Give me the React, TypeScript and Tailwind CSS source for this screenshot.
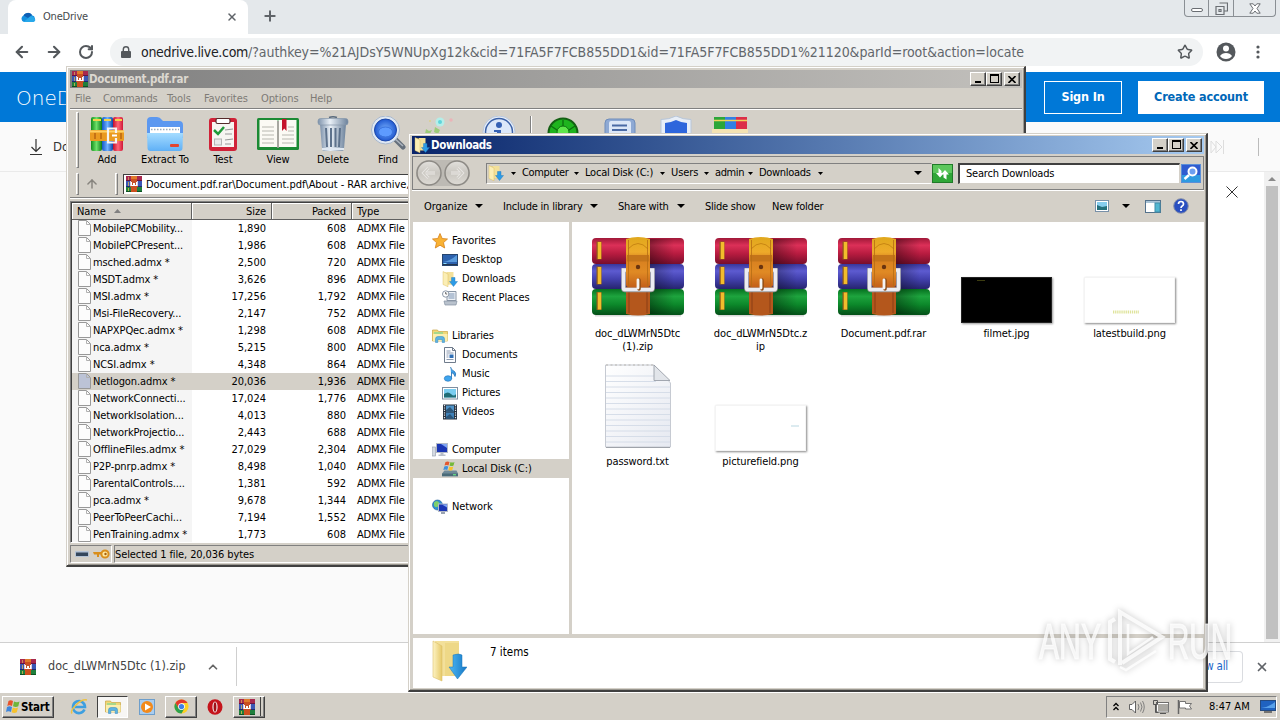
import React from "react";
import { ArrowLeft, ArrowRight, RotateCw, X, Plus, Star, ArrowUp, ChevronUp } from "lucide-react";

type IconProps = { className?: string };

/* ---------- shared icons ---------- */

function RarSmall({ className = "h-4 w-4" }: IconProps) {
  return (
    <svg viewBox="0 0 16 16" className={className} shapeRendering="crispEdges">
      <rect x="0" y="0" width="16" height="5" fill="#a8284e" />
      <rect x="0" y="4" width="16" height="1" fill="#6b1440" />
      <rect x="0" y="5" width="16" height="6" fill="#3a56b4" />
      <rect x="0" y="10" width="16" height="1" fill="#1c2a70" />
      <rect x="0" y="11" width="16" height="5" fill="#1f7f3c" />
      <rect x="0" y="15" width="16" height="1" fill="#0d5222" />
      <rect x="2" y="1" width="1" height="3" fill="#c98a5a" />
      <rect x="2" y="6" width="1" height="4" fill="#b9a468" />
      <rect x="2" y="12" width="1" height="3" fill="#b5b04a" />
      <rect x="5" y="0" width="6" height="16" fill="#cc4f1e" />
      <rect x="5" y="0" width="6" height="3" fill="#e07a2b" />
      <rect x="4" y="5" width="8" height="6" fill="#c4512a" />
      <path d="M5 6h1v3h1V7h2v2h1V6h1v4H5z" fill="#fff" />
      <path d="M4 5h1v5H4zM11 5h1v5h-1z" fill="#d8cde0" />
    </svg>
  );
}

function DownFolder({ className = "h-4 w-4" }: IconProps) {
  return (
    <svg viewBox="0 0 16 16" className={className}>
      <path d="M2 1.500h9v12H2z" fill="#ecd27a" />
      <path d="M5 1h6.500v12H5z" fill="#f3e09a" />
      <path d="M1 .5l5 2.500v12.800L1 13.500z" fill="#fbeeb5" stroke="#d9b650" strokeWidth=".4" />
      <path d="M9.500 6.500h3.500v4h2.500L11.500 15.500 7.500 10.500h2z" fill="#2d9be6" stroke="#1a74b8" strokeWidth=".4" />
    </svg>
  );
}

function ExplorerFolder({ className = "h-4 w-4" }: IconProps) {
  return (
    <svg viewBox="0 0 16 16" className={className}>
      <path d="M.5 2h5l1 1.500h9V13H.5z" fill="#f0d777" stroke="#c9a542" strokeWidth=".7" />
      <path d="M2 4h9v4H2z" fill="#a8d88a" />
      <path d="M1 6h14.500v7H1z" fill="#fbeeae" />
      <path d="M3.500 14.500V11q0-2.500 2.500-2.500h4q2.500 0 2.500 2.500v3.500h-2.300V11.500H5.800v3z" fill="#5cb3e4" stroke="#2f86bd" strokeWidth=".5" />
    </svg>
  );
}

/* ---------- WinRAR toolbar icons ---------- */

function AddIcon() {
  return (
    <svg viewBox="0 0 34 36" className="h-9 w-[34px]">
      <defs>
        <linearGradient id="ag"><stop offset="0" stopColor="#128f1c" /><stop offset=".5" stopColor="#6ee06a" /><stop offset="1" stopColor="#0c7d18" /></linearGradient>
        <linearGradient id="ab"><stop offset="0" stopColor="#1458c8" /><stop offset=".5" stopColor="#6fb2ff" /><stop offset="1" stopColor="#0f47a8" /></linearGradient>
        <linearGradient id="ar"><stop offset="0" stopColor="#c4102c" /><stop offset=".5" stopColor="#ff6678" /><stop offset="1" stopColor="#d01838" /></linearGradient>
      </defs>
      <rect x="1" y="1" width="11" height="34" rx="2" fill="url(#ag)" />
      <rect x="12" y="1" width="11" height="34" rx="2" fill="url(#ab)" />
      <rect x="23" y="1" width="10" height="34" rx="2" fill="url(#ar)" />
      <path d="M3 4h8M14 4h7M25 4h7" stroke="#f6d24a" strokeWidth="2" />
      <rect x="0" y="14" width="34" height="11" rx="1.500" fill="#ea9a20" />
      <path d="M0 15.500h34" stroke="#ffd063" strokeWidth="2" />
      <path d="M5 17v6M11 17v6M31 17v6" stroke="#b96612" strokeWidth="1.500" />
      <path d="M26 17v-4.500h-8v14h8V22" fill="none" stroke="#f4f4f4" strokeWidth="2.200" />
      <path d="M22 19.500h5" stroke="#fff" strokeWidth="2" />
    </svg>
  );
}

function ExtractIcon() {
  return (
    <svg viewBox="0 0 36 36" className="h-9 w-9">
      <defs><linearGradient id="ex" x2="0" y2="1"><stop offset="0" stopColor="#a5dcff" /><stop offset="1" stopColor="#5fb0f6" /></linearGradient></defs>
      <path d="M0 5q0-4 4-4h6q3 0 5 3l1 1h16q4 0 4 4v13H0z" fill="#5c98f0" />
      <path d="M3 11h30v10H3z" fill="#fff" />
      <path d="M4 13.500h28" stroke="#9ab" strokeWidth="1.500" strokeDasharray="1.500 1.500" />
      <path d="M0 17h36l-.5 15q0 3-3 3h-29q-3 0-3-3z" fill="url(#ex)" />
      <rect x="23" y="28" width="9" height="3" rx="1" fill="#e2452f" />
    </svg>
  );
}

function TestIcon() {
  return (
    <svg viewBox="0 0 30 36" className="h-9 w-[30px]">
      <rect x="1" y="2" width="28" height="33" rx="3" fill="#d02238" />
      <path d="M4 6h22v25H4z" fill="#f7f5f2" />
      <rect x="8" y="2.500" width="14" height="5" rx="1.500" fill="#fff" stroke="#552a2a" strokeWidth="1.200" />
      <path d="M6 14l4 4 6-7" fill="none" stroke="#219a3a" strokeWidth="2.500" />
      <path d="M17 14l8-1M17 18h7M17 24l8-1M17 28h6" stroke="#999" strokeWidth="1.200" />
      <rect x="6.500" y="23" width="7" height="6" fill="#e9e9e9" stroke="#b5b5b5" />
    </svg>
  );
}

function ViewIcon() {
  return (
    <svg viewBox="0 0 42 36" className="h-9 w-[42px]">
      <rect x="0" y="2" width="42" height="32" rx="1.500" fill="#1b8a34" />
      <path d="M2.500 4h17q1.500 0 1.500 1 0-1 1.500-1h17v27H22l-1 1-1-1H2.500z" fill="#fbfaf4" />
      <path d="M21 5v27" stroke="#8b8b85" strokeWidth="1.500" />
      <path d="M5 11h12M5 15h12M5 19h12M5 23h12M5 27h12M25 19h12M25 23h12M25 27h12M31 15h6M31 11h6" stroke="#b8b8b0" strokeWidth="1" />
      <path d="M25 3h4.500v12l-2.200-2.500L25 15z" fill="#c5142c" />
    </svg>
  );
}

function DeleteIcon() {
  return (
    <svg viewBox="0 0 32 36" className="h-9 w-8">
      <defs><linearGradient id="tr"><stop offset="0" stopColor="#7d92ab" /><stop offset=".4" stopColor="#e9f0f7" /><stop offset="1" stopColor="#6c829c" /></linearGradient></defs>
      <path d="M12 1.500q4-1.500 8 0" fill="none" stroke="#5a6b7e" strokeWidth="1.500" />
      <path d="M3 8h26l-2 25q0 2-3 2H8q-3 0-3-2z" fill="url(#tr)" />
      <rect x="1" y="2.500" width="30" height="6.500" rx="2.500" fill="url(#tr)" stroke="#8496aa" strokeWidth=".7" />
      <path d="M9 12l1 19M14 12v19M18.500 12v19M23 12l-1 19" stroke="#5d728c" strokeWidth="2" />
      <path d="M5 33h22" stroke="#dfe8f2" strokeWidth="2" />
    </svg>
  );
}

function FindIcon() {
  return (
    <svg viewBox="0 0 36 36" className="h-9 w-9">
      <defs><radialGradient id="fd"><stop offset="0" stopColor="#7db4ff" /><stop offset="1" stopColor="#1f58d0" /></radialGradient></defs>
      <path d="M24 22l9 9" stroke="#66707c" strokeWidth="5" strokeLinecap="round" />
      <path d="M24 22l9 8" stroke="#aeb6c0" strokeWidth="1.500" />
      <circle cx="15.500" cy="14" r="14" fill="#dfe8f4" stroke="#a9b8cc" />
      <circle cx="15.500" cy="14" r="11" fill="url(#fd)" stroke="#1c47a8" />
      <ellipse cx="15.500" cy="16" rx="7" ry="5" fill="#5d9bff" stroke="#3872dd" />
    </svg>
  );
}

function WizardIcon() {
  return (
    <svg viewBox="0 0 30 36" className="h-9 w-[30px]">
      <path d="M1 13l3 2 3-1-2 4H0zM10 11l5 3-2 4-4-2z" fill="#9ccb78" />
      <circle cx="15" cy="6" r="4.500" fill="#b4eee9" /><circle cx="15" cy="6" r="2" fill="#5fd4da" />
      <circle cx="26" cy="4" r="1.800" fill="#eab4b8" /><circle cx="5" cy="5" r="1" fill="#dcd18c" />
    </svg>
  );
}

function InfoIcon() {
  return (
    <svg viewBox="0 0 34 36" className="h-9 w-[34px]">
      <circle cx="17" cy="16" r="16" fill="#e9f0fa" stroke="#b6c6dd" />
      <circle cx="17" cy="16" r="13.500" fill="#dce8f9" stroke="#3c62a8" strokeWidth="1.500" />
      <circle cx="17" cy="9" r="3" fill="#3561b4" /><path d="M12 14h7v10h-4v-8h-3z" fill="#3561b4" />
    </svg>
  );
}

function VirusIcon() {
  return (
    <svg viewBox="0 0 34 36" className="h-9 w-[34px]">
      <circle cx="17" cy="17" r="14.500" fill="#1eb41e" stroke="#146014" strokeWidth="2" />
      <path d="M17 4v28M5 10l24 16M29 10L5 26" stroke="#0c6e0f" strokeWidth="1.300" />
      <circle cx="17" cy="16" r="6" fill="#5ee64a" stroke="#0d7210" />
    </svg>
  );
}

function CommentIcon() {
  return (
    <svg viewBox="0 0 32 36" className="h-9 w-8">
      <rect x="1" y="3" width="30" height="24" rx="4" fill="#8ea9d4" stroke="#6f8dbb" />
      <rect x="5" y="5" width="22" height="20" rx="2" fill="#dce7f7" />
      <path d="M8 9.500h15M8 14h15" stroke="#4a6aa4" strokeWidth="2" />
    </svg>
  );
}

function ProtectIcon() {
  return (
    <svg viewBox="0 0 32 36" className="h-9 w-8">
      <path d="M16 0q7 3.500 15 3.500V18q0 11-15 17Q1 29 1 18V3.500Q9 3.500 16 0z" fill="#e7eef8" stroke="#b7c6da" />
      <path d="M16 4q6 3 11 3V18q0 8-11 13Q5 26 5 18V7Q10 7 16 4z" fill="#2e66dc" />
    </svg>
  );
}

function SfxIcon() {
  return (
    <svg viewBox="0 0 36 36" className="h-9 w-9">
      <path d="M2 1h11v12H2z" fill="#2ba63a" /><path d="M13 1h11v12H13z" fill="#3180e6" /><path d="M24 1h11v12H24z" fill="#dc2e4a" />
      <path d="M2 4.500h33" stroke="#f1d35a" strokeWidth="1.500" />
      <path d="M0 13h36v18H0z" fill="#f3e2b2" />
    </svg>
  );
}

/* ---------- explorer side icons ---------- */

const side: Record<string, React.ReactNode> = {
  Favorites: <path d="M8 .5l2.200 5 5.300.5-4 3.600 1.200 5.400L8 12.200 3.300 15l1.200-5.400L.5 6l5.300-.5z" fill="#f9b233" stroke="#d5801a" strokeWidth=".8" />,
  Desktop: (
    <>
      <rect x=".5" y="2.500" width="15" height="11" fill="#2d62ae" stroke="#26456e" />
      <path d="M1 10Q8 9 15 3v7z" fill="#5a9bdc" /><path d="M1 12.500h14" stroke="#24364e" /><path d="M1.500 11.500h3" stroke="#8ee0ff" />
    </>
  ),
  "Recent Places": (
    <>
      <path d="M5 1.500h9v9H5z" fill="#eef2f7" stroke="#8b97a6" /><path d="M6.500 4h6M6.500 6h6M6.500 8h6" stroke="#7a93b3" />
      <path d="M2 11h13l-1 4H3z" fill="#b9c2cd" stroke="#8490a0" strokeWidth=".7" />
      <circle cx="3.700" cy="4" r="3.200" fill="#fff" stroke="#8b97a6" /><path d="M3.700 2v2h1.500" fill="none" stroke="#444" strokeWidth=".8" />
    </>
  ),
  Documents: (
    <>
      <path d="M2.500.5h8l3 3v12h-11z" fill="#fcfdff" stroke="#6f7b8b" /><path d="M10.500.5v3h3" fill="none" stroke="#6f7b8b" />
      <path d="M4.500 4h4M4.500 6h7M4.500 12.500h7M4.500 8h2M4.500 10h2" stroke="#8d9bb0" /><rect x="7.500" y="7.500" width="4" height="3.500" fill="#2f6fb5" />
    </>
  ),
  Music: (
    <>
      <path d="M8.500 1q.5 3 4 4.500 2 2 .5 5-.3-3-3.500-4v6.500" fill="#3f9ee6" stroke="#1d6db4" strokeWidth=".8" />
      <ellipse cx="6" cy="12.500" rx="3.700" ry="2.800" fill="#3fa5ee" stroke="#1d6db4" strokeWidth=".6" />
    </>
  ),
  Pictures: (
    <>
      <rect x=".5" y="2.500" width="15" height="11.500" fill="#fff" stroke="#7f8fa0" /><rect x="2" y="4" width="12" height="8.500" fill="#79cdf0" />
      <path d="M2 9q4-3 7 0t5 0v3.500H2z" fill="#1f6d76" />
    </>
  ),
  Videos: (
    <>
      <rect x="1" y=".5" width="14" height="15" fill="#26303c" /><path d="M2.500 1v14M13.500 1v14" stroke="#dfe6ee" strokeWidth="1.200" strokeDasharray="1.200 1.200" />
      <rect x="4" y="1.500" width="8" height="6" fill="#4f93c8" /><rect x="4" y="8.500" width="8" height="6" fill="#3f81b8" />
      <path d="M4 6l4-3 4 4.500H4zM4 13l4-3 4 4.500H4z" fill="#2b5578" />
    </>
  ),
  Computer: (
    <>
      <rect x="0" y="5" width="3.500" height="9" fill="#d5dae2" stroke="#8e97a5" strokeWidth=".6" />
      <rect x="4.500" y="1.500" width="11" height="9" fill="#1b36b4" stroke="#b4bac6" /><path d="M9 2h6v4z" fill="#7fa4f4" />
      <path d="M8.500 11h3v1.500h2V14h-7v-1.500h2z" fill="#b8bec9" />
    </>
  ),
  "Local Disk (C:)": (
    <>
      <path d="M2.500 9.500h12l1.500 3v3H0v-3z" fill="#6f8a98" /><path d="M0 12.500h16V15H0z" fill="#4a6b78" /><path d="M11 13.800h3" stroke="#6fff8a" />
      <path d="M3.500 1q2-1 4 0L6.500 4.500q-2-1-4 0z" fill="#e4572e" /><path d="M8.500 1q2 1 4 0L11.500 4.500q-2 1-4 0z" fill="#75b83a" />
      <path d="M2.300 5.500q2-1 4 0l-1 3.500q-2-1-4 0z" fill="#3f8fdc" /><path d="M7.300 5.500q2 1 4 0l-1 3.500q-2 1-4 0z" fill="#f6c22e" />
    </>
  ),
  Network: (
    <>
      <circle cx="5.500" cy="6" r="5" fill="#2f8fd4" stroke="#1c5c94" strokeWidth=".6" /><path d="M2 3.500q3-3 5 0t-1 4q-3 2-4-1z" fill="#7ed06b" />
      <rect x="6.500" y="5" width="9" height="7.500" fill="#1b36b4" stroke="#b4bac6" /><path d="M10 5.500h5v3z" fill="#7fa4f4" /><path d="M9 13h4v2H9z" fill="#9aa3b2" />
    </>
  ),
};

function SideIcon({ name }: { name: string }) {
  if (name === "Downloads") return <DownFolder />;
  if (name === "Libraries") return <ExplorerFolder />;
  return <svg viewBox="0 0 16 16" className="h-4 w-4">{side[name]}</svg>;
}

/* ---------- file thumbnails ---------- */

function RarBig() {
  return (
    <svg viewBox="0 0 92 80" className="h-20 w-[92px]">
      <defs>
        <linearGradient id="br" x2="0" y2="1"><stop offset="0" stopColor="#a01838" /><stop offset=".28" stopColor="#dc3058" /><stop offset=".6" stopColor="#b81c40" /><stop offset="1" stopColor="#780e2c" /></linearGradient>
        <linearGradient id="bb" x2="0" y2="1"><stop offset="0" stopColor="#38369c" /><stop offset=".28" stopColor="#5d5bd0" /><stop offset=".6" stopColor="#4341ae" /><stop offset="1" stopColor="#26246e" /></linearGradient>
        <linearGradient id="bg" x2="0" y2="1"><stop offset="0" stopColor="#06701f" /><stop offset=".28" stopColor="#1ea43e" /><stop offset=".6" stopColor="#0c882a" /><stop offset="1" stopColor="#045018" /></linearGradient>
        <linearGradient id="bt" x2="0" y2="1"><stop offset="0" stopColor="#e0a81c" /><stop offset=".3" stopColor="#eeaa2a" /><stop offset=".45" stopColor="#d8801f" /><stop offset=".7" stopColor="#e08a24" /><stop offset="1" stopColor="#c4601a" /></linearGradient>
        <linearGradient id="bs"><stop offset="0" stopColor="#000" stopOpacity=".35" /><stop offset=".35" stopColor="#000" stopOpacity=".22" /><stop offset="1" stopColor="#000" stopOpacity="0" /></linearGradient>
      </defs>
      <path d="M3 78.500h86" stroke="#000" strokeOpacity=".15" strokeWidth="2" />
      <rect x="0" y="1" width="92" height="26" rx="4" fill="url(#br)" />
      <rect x="0" y="27" width="92" height="25" rx="4" fill="url(#bb)" />
      <rect x="0" y="52" width="92" height="26" rx="4" fill="url(#bg)" />
      <rect x="58" y="2" width="24" height="75" fill="url(#bs)" />
      <path d="M7 4.500v18M7 29.500v18M7 55v18" stroke="#8e5a18" strokeWidth="5" />
      <path d="M7.500 5v17M7.500 30v17M7.500 55.500v17" stroke="#f2bc2c" strokeWidth="3.500" />
      <path d="M34 50h24v27q-12 3-24 0z" fill="#b4571c" />
      <path d="M37 52v24M55 52v24" stroke="#8a3f14" />
      <path d="M34 33.500h-2.500v18q0 1.500 1.500 1.500h26q1.500 0 1.500-1.500v-18H58" fill="none" stroke="#9a9a9a" strokeWidth="4.500" />
      <path d="M34 33h-2.500v18q0 1.500 1.500 1.500h26q1.500 0 1.500-1.500V33H58" fill="none" stroke="#ececf2" strokeWidth="3.500" />
      <path d="M34 2q12-4 24 0v46q0 2-2 2H36q-2 0-2-2z" fill="url(#bt)" />
      <path d="M35 18h22v6.500H35z" fill="#c4741a" /><path d="M36 12q10-11 20 0" fill="none" stroke="#c88613" />
      <path d="M36.500 3v47M55.500 3v47" stroke="#b56c14" strokeWidth=".8" />
      <circle cx="46" cy="30" r="2.200" fill="#6a3410" />
      <path d="M47 43v9" stroke="#8a4a14" strokeWidth="3.500" strokeLinecap="round" />
      <path d="M46 43v8" stroke="#f4f4f4" strokeWidth="2.800" strokeLinecap="round" />
    </svg>
  );
}

function TextBig() {
  return (
    <svg viewBox="0 0 68 86" className="h-[86px] w-[68px]">
      <defs><linearGradient id="tx" x1="0" x2="1" y2="1"><stop offset="0" stopColor="#fff" /><stop offset="1" stopColor="#e6e9f1" /></linearGradient></defs>
      <path d="M1.500 2H50l16.500 18v64h-65z" fill="url(#tx)" stroke="#c6cad2" />
      <path d="M2 13h48M2 18.500h50M2 24h64M2 29.500h64M2 35h64M2 40.500h64M2 46h64M2 51.500h64M2 57h64M2 62.500h64M2 68h64M2 73.500h64M2 79h64" stroke="#d3dae7" strokeWidth=".9" />
      <path d="M50 2v15.500h16z" fill="#e2e5ea" stroke="#9a9fa8" strokeWidth=".9" />
      <path d="M2 2h48" stroke="#cdcdcd" strokeWidth="2" strokeDasharray="2 2.500" />
      <path d="M2 84.500h64" stroke="#9fa3aa" />
    </svg>
  );
}

/* ---------- classic window pieces ---------- */

const raised = "border border-t-white border-l-white border-r-[#404040] border-b-[#404040] bg-[#d4d0c8] shadow-[inset_-1px_-1px_0_#808080]";

function WindowButtons() {
  return (
    <div className="flex h-3.5 items-center">
      <div className={`flex h-3.5 w-4 items-end pb-0.5 pl-1 ${raised}`}><div className="h-0.5 w-1.5 bg-black" /></div>
      <div className={`flex h-3.5 w-4 items-start justify-center pt-px ${raised}`}><div className="h-[9px] w-[9px] border border-t-2 border-black" /></div>
      <div className={`ml-0.5 flex h-3.5 w-4 items-center justify-center ${raised}`}>
        <svg viewBox="0 0 8 7" className="h-[7px] w-2"><path d="M.5 0l7 7M7.500 0l-7 7" stroke="#000" strokeWidth="1.600" /></svg>
      </div>
    </div>
  );
}

function Caret({ className = "" }: IconProps) {
  return <svg viewBox="0 0 8 4" className={`h-1 w-2 shrink-0 ${className}`}><path d="M0 0h8L4 4z" fill="#000" /></svg>;
}

function SmallCaret({ className = "" }: IconProps) {
  return <svg viewBox="0 0 5 3" className={`h-[3px] w-[5px] shrink-0 ${className}`}><path d="M0 0h5L2.500 3z" fill="#000" /></svg>;
}

/* ---------- browser ---------- */

function Browser() {
  return (
    <div className="flex h-[692px] w-full flex-col bg-white">
      <div className="flex h-[34px] justify-between bg-[#e4e8eb]">
        <div className="flex pl-2">
          <div className="flex w-60 items-center rounded-t-lg bg-white pl-3 pr-2.5">
            <svg viewBox="0 0 16 10" className="h-2.5 w-4">
              <path d="M4 10a3.500 3.500 0 0 1-.5-6.500A5 5 0 0 1 12 3.200 3.500 3.500 0 0 1 12.500 10z" fill="#1490df" />
              <path d="M3.500 3.500A5 5 0 0 1 12 3l-4 3z" fill="#0f5fb4" /><path d="M3.500 10L9 5.500q2-2.500 5 0 2 2 .5 4-1 .5-2 .5z" fill="#28a8ea" />
            </svg>
            <span className="ml-[7px] grow pt-px text-[11px] tracking-[-0.2px] text-[#45494d]">OneDrive</span>
            <X className="h-3 w-3 text-[#5f6368]" strokeWidth={3} />
          </div>
          <Plus className="ml-3.5 mt-2 h-4 w-4 text-[#5f6368]" strokeWidth={3} />
        </div>
        <div className="mr-1 flex h-[17px] rounded-b border border-t-0 border-[#8a8f94] text-[#6a6e73]">
          <div className="flex w-6 items-center justify-center border-r border-[#8a8f94]"><div className="mt-1 h-1 w-3 rounded-sm border border-[#6a6e73] bg-white" /></div>
          <div className="flex w-[25px] items-center justify-center border-r border-[#8a8f94]">
            <svg viewBox="0 0 13 13" className="h-[13px] w-[13px]"><path d="M4.500 1h8v8h-3M1 4.500h8v8H1zM4 7.500h2v2H4z" fill="none" stroke="#6a6e73" strokeWidth="1.200" /></svg>
          </div>
          <div className="flex w-[41px] items-center justify-center">
            <svg viewBox="0 0 12 11" className="h-[11px] w-3"><path d="M.8.8h3.400L6 3 7.800.8h3.400L8 5.500l3.200 4.700H7.800L6 8l-1.800 2.200H.8L4 5.500z" fill="#fff" stroke="#6a6e73" /></svg>
          </div>
        </div>
      </div>
      <div className="flex h-[38px] items-center pb-0.5 pl-3.5 pr-3 text-[#54585c]">
        <ArrowLeft className="-ml-px h-4.5 w-4.5" strokeWidth={2.800} />
        <ArrowRight className="ml-3.5 h-4.5 w-4.5" strokeWidth={2.800} />
        <RotateCw className="ml-[15px] h-4 w-4" strokeWidth={3} />
        <div className="ml-4 flex h-7 w-[1093px] items-center rounded-full bg-[#f1f3f4] pl-2 pr-2.5">
          <svg viewBox="0 0 10 12" className="ml-[3px] h-3 w-2.5"><path d="M1 5h8q1 0 1 1v5q0 1-1 1H1q-1 0-1-1V6q0-1 1-1z" fill="#54585c" /><path d="M2.300 5V3.500a2.700 2.700 0 0 1 5.400 0V5" fill="none" stroke="#54585c" strokeWidth="1.400" /></svg>
          <span className="ml-2.5 grow whitespace-nowrap text-[14px] tracking-[-0.06px] text-[#62666b]"><span className="tracking-[-0.32px] text-[#202124]">onedrive.live.com</span>/?authkey=%21AJDsY5WNUpXg12k&amp;cid=71FA5F7FCB855DD1&amp;id=71FA5F7FCB855DD1%21120&amp;parId=root&amp;action=locate</span>
          <Star className="h-4 w-4" strokeWidth={2.200} />
        </div>
        <svg viewBox="0 0 20 20" className="ml-[13px] h-5 w-5"><circle cx="10" cy="10" r="9.500" fill="#54585c" /><circle cx="10" cy="6.500" r="3" fill="#fff" /><path d="M4 14q2-3 6-3t6 3q-2 3-6 3t-6-3z" fill="#fff" /></svg>
        <svg viewBox="0 0 4 14" className="ml-5 h-3.5 w-1"><circle cx="2" cy="2" r="1.600" fill="#54585c" /><circle cx="2" cy="7" r="1.600" fill="#54585c" /><circle cx="2" cy="12" r="1.600" fill="#54585c" /></svg>
      </div>
      <div className="flex h-[50px] items-center justify-between bg-[#0078d7] pl-4 pr-4">
        <span className="pt-0.5 font-['DejaVu_Sans','DejaVu_Sans_Condensed',sans-serif] text-[20px] font-extralight text-white">OneDrive</span>
        <div className="flex gap-4 text-[12.500px] font-bold tracking-[-0.15px]">
          <div className="flex h-[33px] w-[78px] items-center justify-center border border-white text-white">Sign In</div>
          <div className="flex h-[33px] w-[126px] items-center justify-center bg-white text-[#0067b8]">Create account</div>
        </div>
      </div>
      <div className="flex h-[50px] items-center justify-between border-b border-[#eaeaea] bg-[#fafafa] pl-[29px] pr-[21px]">
        <div className="flex items-center gap-2.5">
          <svg viewBox="0 0 14 16" className="h-4 w-3.5"><path d="M7 0v12M2.500 8L7 12.500 11.500 8M1 15.500h12" fill="none" stroke="#333" strokeWidth="1.200" /></svg>
          <span className="text-[13px] text-[#333]">Do</span>
        </div>
        <div className="flex items-center gap-[34px]">
          <svg viewBox="0 0 14 14" className="h-3.5 w-3.5"><path d="M1 1l5 6-5 6zM6 1l6 6-6 6zM13.500 0v14" fill="none" stroke="#ddd" /></svg>
          <div className="h-[18px] w-px bg-[#bbb]" />
        </div>
      </div>
      <div className="flex min-h-0 grow">
        <div className="w-[1100px] bg-[#fafafa]" />
        <div className="flex w-[164px] justify-end bg-white pr-[26px] pt-3.5">
          <svg viewBox="0 0 12 12" className="h-3 w-3"><path d="M.5.5l11 11M11.500.5l-11 11" stroke="#333" /></svg>
        </div>
        <div className="flex w-4 flex-col items-center bg-[#f1f1f1]">
          <svg viewBox="0 0 8 4" className="mt-[5px] h-1 w-2"><path d="M4 0l4 4H0z" fill="#8a8a8a" /></svg>
          <div className="mt-[5px] h-[453px] w-3 bg-[#c1c1c1]" />
        </div>
      </div>
      <div className="flex h-[50px] items-center justify-between border-t border-[#d0d0d0] bg-white pb-0.5 pl-5 pr-[11px]">
        <div className="flex h-[39px] items-center border-r border-[#cfcfcf] pr-4">
          <RarSmall />
          <span className="ml-3 w-[139px] whitespace-nowrap text-[12.500px] text-[#444]">doc_dLWMrN5Dtc (1).zip</span>
          <ChevronUp className="ml-[19px] h-3.5 w-3.5 text-[#666]" strokeWidth={3} />
        </div>
        <div className="flex items-center gap-3">
          <div className="flex h-8 w-12 items-center justify-end whitespace-nowrap rounded-r border border-l-0 border-[#dadce0] pr-3.5 text-[11.500px] tracking-[-0.2px] text-[#1a66c8]">w all</div>
          <X className="h-3.5 w-3.5 text-[#5f6368]" strokeWidth={3} />
        </div>
      </div>
    </div>
  );
}

/* ---------- WinRAR ---------- */

const rows: [string, string, string][] = [
  ["MobilePCMobility...", "1,890", "608"],
  ["MobilePCPresent...", "1,986", "608"],
  ["msched.admx *", "2,500", "720"],
  ["MSDT.admx *", "3,626", "896"],
  ["MSI.admx *", "17,256", "1,792"],
  ["Msi-FileRecovery...", "2,147", "752"],
  ["NAPXPQec.admx *", "1,298", "608"],
  ["nca.admx *", "5,215", "800"],
  ["NCSI.admx *", "4,348", "864"],
  ["Netlogon.admx *", "20,036", "1,936"],
  ["NetworkConnecti...", "17,024", "1,776"],
  ["NetworkIsolation...", "4,013", "880"],
  ["NetworkProjectio...", "2,443", "688"],
  ["OfflineFiles.admx *", "27,029", "2,304"],
  ["P2P-pnrp.admx *", "8,498", "1,040"],
  ["ParentalControls....", "1,381", "592"],
  ["pca.admx *", "9,678", "1,344"],
  ["PeerToPeerCachi...", "7,194", "1,552"],
  ["PenTraining.admx *", "1,773", "608"],
];

function Tool({ width, label, children }: { width: string; label?: string; children: React.ReactNode }) {
  return (
    <div className={`flex ${width} shrink-0 flex-col items-center`}>
      {children}
      <div className="h-4 whitespace-nowrap leading-4">{label}</div>
    </div>
  );
}

function Grip({ height }: { height: string }) {
  return <div className={`${height} w-[3px] shrink-0 border border-b-[#808080] border-l-white border-r-[#808080] border-t-white`} />;
}

function WinRar() {
  return (
    <div className="absolute left-[66px] top-[66px] flex h-[501px] w-[960px] flex-col border border-b-2 border-r-2 border-b-[#404040] border-l-[#d4d0c8] border-r-[#404040] border-t-[#d4d0c8] bg-[#d4d0c8] p-[3px] pr-0.5 text-[11px] tracking-[-0.1px] text-black shadow-[inset_1px_1px_0_#fff,inset_-1px_-1px_0_#9a9790] [&_span]:pt-0.5">
      <div className="flex h-[18px] shrink-0 items-center bg-linear-to-r from-[#7f7f7f] to-[#c2c0bc] pl-0.5 pr-0.5">
        <RarSmall />
        <span className="ml-px grow text-[11.500px] font-bold tracking-[-0.25px] text-[#dcd8d0]">Document.pdf.rar</span>
        <WindowButtons />
      </div>
      <div className="flex h-5 shrink-0 items-center pl-[5px] text-[#7e7b76]">
        <span className="w-7">File</span>
        <span className="w-16 tracking-[-0.2px]">Commands</span>
        <span className="w-[37px]">Tools</span>
        <span className="w-[57px]">Favorites</span>
        <span className="w-[49px]">Options</span>
        <span>Help</span>
      </div>
      <div className="flex h-[62px] shrink-0 border-t border-[#808080] pl-1.5 pt-[3px] shadow-[inset_0_1px_0_#fff]">
        <Grip height="h-[56px]" />
        <div className="ml-px flex pt-1">
          <Tool width="w-[54px]" label="Add"><AddIcon /></Tool>
          <Tool width="w-[62px]" label="Extract To"><ExtractIcon /></Tool>
          <Tool width="w-[54px]" label="Test"><TestIcon /></Tool>
          <Tool width="w-[56px]" label="View"><ViewIcon /></Tool>
          <Tool width="w-[54px]" label="Delete"><DeleteIcon /></Tool>
          <Tool width="w-[56px]" label="Find"><FindIcon /></Tool>
          <Tool width="w-[48px]"><WizardIcon /></Tool>
          <Tool width="w-[70px]"><InfoIcon /></Tool>
          <div className="-ml-1 mr-0.5 h-12 w-0.5 border-l border-r border-l-[#808080] border-r-white" />
          <Tool width="w-[58px]"><VirusIcon /></Tool>
          <Tool width="w-[56px]"><CommentIcon /></Tool>
          <Tool width="w-[56px]"><ProtectIcon /></Tool>
          <Tool width="w-[52px]"><SfxIcon /></Tool>
        </div>
      </div>
      <div className="flex h-7 shrink-0 items-center border-b border-[#808080] pl-1.5 shadow-[0_1px_0_#fff]">
        <Grip height="h-[22px]" />
        <ArrowUp className="ml-1.5 h-3.5 w-3.5 text-[#87847e]" strokeWidth={2.500} />
        <div className="ml-4"><Grip height="h-[22px]" /></div>
        <div className="ml-[5px] flex h-5 grow items-center border-l border-t border-[#404040] bg-white pl-0.5">
          <RarSmall />
          <span className="ml-1 whitespace-nowrap tracking-[-0.05px]">Document.pdf.rar\Document.pdf\About - RAR archive, unpacked size 5,103,272 bytes</span>
        </div>
      </div>
      <div className="mr-0.5 mt-[3px] flex h-[342px] shrink-0 flex-col overflow-hidden border border-b-white border-l-[#808080] border-r-white border-t-[#808080] bg-white">
        <div className="flex h-[18px] shrink-0 border-l border-t border-[#404040] bg-[#d4d0c8]">
          <div className="flex w-[120px] items-center border-b border-r border-[#606060] pl-[5px] shadow-[inset_1px_1px_0_#fff]">
            <span>Name</span><svg viewBox="0 0 7 4" className="ml-2 h-1 w-[7px]"><path d="M3.500 0L7 4H0z" fill="#808080" /></svg>
          </div>
          <div className="flex w-20 items-center justify-end border-b border-r border-[#606060] pr-[5px] shadow-[inset_1px_1px_0_#fff]"><span>Size</span></div>
          <div className="flex w-20 items-center justify-end border-b border-r border-[#606060] pr-[5px] shadow-[inset_1px_1px_0_#fff]"><span>Packed</span></div>
          <div className="flex grow items-center border-b border-r border-[#606060] pl-[5px] shadow-[inset_1px_1px_0_#fff]"><span>Type</span></div>
        </div>
        {rows.map(([name, size, packed]) => {
          const sel = name.startsWith("Netlogon");
          return (
            <div key={name} className={`flex h-[17px] shrink-0 items-center border-l border-[#404040] ${sel ? "bg-[#d4d0c8]" : "bg-white"}`}>
              <div className={`flex h-[17px] w-[120px] items-center pl-1.5 ${sel ? "" : "bg-[#f5f5f5]"}`}>
                <svg viewBox="0 0 13 16" className="-mt-px h-4 w-[13px] shrink-0"><path d="M.5.5h8l4 4v11H.5z" fill={sel ? "#bcc3d6" : "#fcfcfc"} stroke="#989898" /><path d="M8.500.5v4h4" fill="none" stroke="#b0b0b0" /></svg>
                <span className="ml-0.5 whitespace-nowrap">{name}</span>
              </div>
              <span className="w-[74px] text-right tracking-normal">{size}</span>
              <span className="w-20 text-right tracking-normal">{packed}</span>
              <span className="ml-[11px] whitespace-nowrap tracking-[-0.2px]">ADMX File</span>
            </div>
          );
        })}
      </div>
      <div className="mt-0.5 flex h-[18px] shrink-0 gap-0.5">
        <div className="flex w-[42px] items-center gap-1 border border-b-white border-l-[#808080] border-r-white border-t-[#808080] pl-1">
          <svg viewBox="0 0 14 6" className="h-1.5 w-3.5"><rect width="14" height="6" rx="1" fill="#b4c3d6" /><rect x="1" y="1.500" width="12" height="3.500" fill="#35475c" /></svg>
          <svg viewBox="0 0 17 10" className="h-2.5 w-[17px]"><path d="M0 3h9v2.500H6V8H4V5.500H1z" fill="#d98e1b" /><circle cx="12" cy="5" r="3.600" fill="#ffe9a0" stroke="#d98e1b" strokeWidth="2" /><circle cx="12.500" cy="5" r="1.200" fill="#a85f0c" /></svg>
        </div>
        <div className="flex grow items-center border border-b-white border-l-[#808080] border-r-white border-t-[#808080]"><span>Selected 1 file, 20,036 bytes</span></div>
      </div>
    </div>
  );
}

/* ---------- Explorer ---------- */

const nav: [string, number][] = [
  ["Favorites", 0], ["Desktop", 1], ["Downloads", 1], ["Recent Places", 1], ["", 0],
  ["Libraries", 0], ["Documents", 1], ["Music", 1], ["Pictures", 1], ["Videos", 1], [" ", 0],
  ["Computer", 0], ["Local Disk (C:)", 1], ["  ", 0], ["Network", 0],
];

const crumbs: [string, string][] = [
  ["Computer", "w-[52px] tracking-[-0.35px]"],
  ["Local Disk (C:)", "w-[75px] tracking-[-0.2px]"],
  ["Users", "w-[33px]"],
  ["admin", "w-[33px] tracking-[-0.4px]"],
  ["Downloads", "w-[59px] tracking-[-0.3px]"],
];

function FileCell({ lines, children }: { lines: string[]; children: React.ReactNode }) {
  return (
    <div className="flex h-32 w-[123px] flex-col items-center text-center">
      <div className="flex h-[98px] items-end pb-[3px]">{children}</div>
      <div className="mt-px">
        {lines.map((l) => <div key={l} className="h-[13px] whitespace-nowrap leading-[13px]">{l}</div>)}
      </div>
    </div>
  );
}

function RoundArrow({ flip = false }: { flip?: boolean }) {
  return (
    <svg viewBox="0 0 26 26" className={`h-[26px] w-[26px] ${flip ? "-scale-x-100" : ""}`}>
      <defs><linearGradient id="ra" x2="0" y2="1"><stop offset="0" stopColor="#e3e1dd" /><stop offset=".5" stopColor="#c9c6c0" /><stop offset="1" stopColor="#dedbd5" /></linearGradient></defs>
      <circle cx="13" cy="13" r="12" fill="url(#ra)" stroke="#8d8a85" strokeWidth="1.500" />
      <path d="M19 13H8M12.500 8L7.500 13l5 5" fill="none" stroke="#e9e7e4" strokeWidth="3" />
      <path d="M19 13H8M12.500 8L7.500 13l5 5" fill="none" stroke="#cfccc6" strokeWidth="1.200" />
    </svg>
  );
}

function Explorer() {
  return (
    <div className="absolute left-[408px] top-[133px] flex h-[559px] w-[800px] flex-col border border-b-2 border-r-2 border-b-[#404040] border-l-[#d4d0c8] border-r-[#404040] border-t-[#d4d0c8] bg-[#d4d0c8] pb-0.5 pl-[3px] pr-0.5 pt-0.5 text-[11px] tracking-[-0.1px] text-black shadow-[inset_1px_1px_0_#fff,inset_-1px_-1px_0_#9a9790] [&_span]:pt-0.5">
      <div className="flex h-[18px] shrink-0 items-center bg-linear-to-r from-[#0a246a] to-[#a6caf0] pl-0.5 pr-0.5">
        <DownFolder />
        <span className="ml-px grow text-[11.500px] font-bold tracking-[-0.35px] text-white">Downloads</span>
        <WindowButtons />
      </div>
      <div className="mt-0.5 flex h-[34px] shrink-0 items-center border border-[#808080] pl-[3px] shadow-[0_1px_0_#fff]">
        <div className="flex gap-0.5 rounded-full bg-[#bdbab4]"><RoundArrow /><RoundArrow flip /></div>
        <div className="ml-4 flex h-[21px] w-[446px] items-center border border-b-white border-l-[#808080] border-r-transparent border-t-[#808080] pl-px">
          <DownFolder />
          <SmallCaret className="ml-[7px]" />
          {crumbs.map(([t, w]) => (
            <React.Fragment key={t}>
              <span className={`ml-1.5 whitespace-nowrap pb-0.5 ${w}`}>{t}</span>
              <SmallCaret />
            </React.Fragment>
          ))}
          <Caret className="ml-auto mr-[9px]" />
        </div>
        <svg viewBox="0 0 21 19" className="h-[19px] w-[21px]">
          <rect x=".5" y=".5" width="20" height="18" fill="#2fa637" stroke="#207a28" /><path d="M1 1h19v8H1z" fill="#5cc75c" />
          <path d="M6.500 4v5H4l4 4.500L12 9H9.500V7zM14.500 15.500v-5H17L13 6l-4 4.500h2.500v3z" fill="#fff" />
        </svg>
        <div className="ml-[5px] flex h-[21px] w-[222px] items-center border border-b-[#d4d0c8] border-l-2 border-l-[#404040] border-r-[#d4d0c8] border-t-2 border-t-[#404040] bg-white pl-1.5"><span className="pb-px tracking-[-0.2px]">Search Downloads</span></div>
        <svg viewBox="0 0 20 19" className="ml-px h-[19px] w-5">
          <rect x=".5" y=".5" width="19" height="18" fill="#2f5cd0" stroke="#5b8fd8" /><path d="M1 11h18v7H1z" fill="#2e9ae0" />
          <circle cx="11.500" cy="7.500" r="4" fill="#6d9ff0" stroke="#fff" strokeWidth="2" /><path d="M8 11L3.500 15" stroke="#fff" strokeWidth="2.500" />
        </svg>
      </div>
      <div className="flex h-8 shrink-0 items-center pl-3">
        <span className="w-[51px]">Organize</span><Caret />
        <span className="ml-5 w-[87px] whitespace-nowrap tracking-[-0.2px]">Include in library</span><Caret />
        <span className="ml-5 w-[59px] whitespace-nowrap tracking-[-0.2px]">Share with</span><Caret />
        <span className="ml-5 w-[67px] whitespace-nowrap tracking-[-0.25px]">Slide show</span>
        <span className="grow tracking-[-0.2px]">New folder</span>
        <svg viewBox="0 0 14 12" className="h-3 w-3.5"><rect x=".5" y=".5" width="13" height="11" fill="#fff" stroke="#7890a8" /><rect x="2" y="2" width="10" height="5" fill="#86cdee" /><path d="M2 5l5 2 5-1v4H2z" fill="#24707c" /></svg>
        <Caret className="ml-[13px]" />
        <svg viewBox="0 0 16 13" className="ml-[15px] h-[13px] w-4"><rect x=".5" y=".5" width="15" height="12" fill="#fff" stroke="#54728c" /><path d="M1 2h14" stroke="#a9c3d6" strokeWidth="2" /><rect x="10" y="3" width="5" height="9" fill="#52b6d0" stroke="#3f8ca8" /></svg>
        <svg viewBox="0 0 16 16" className="ml-3 mr-[15px] h-4 w-4"><circle cx="8" cy="8" r="7.300" fill="#2a4fc0" stroke="#8b93a8" /><path d="M5.500 6q0-2.500 2.500-2.500T10.500 6q0 1.300-1.300 2Q8 8.700 8 10M8 11.300v1.800" fill="none" stroke="#fff" strokeWidth="1.700" /></svg>
      </div>
      <div className="ml-px flex min-h-0 grow bg-white">
        <div className="flex w-[156px] shrink-0 flex-col pt-[9px]">
          {nav.map(([name, depth]) => (
            <div key={name} className={`flex h-[19px] items-center gap-1 ${depth ? "pl-[29px]" : "pl-[19px]"} ${name.startsWith("Local") ? "bg-[#d4d0c8]" : ""}`}>
              {name.trim() && <><SideIcon name={name} /><span className="whitespace-nowrap">{name}</span></>}
            </div>
          ))}
        </div>
        <div className="w-[3px] shrink-0 bg-[#d4d0c8]" />
        <div className="flex min-w-0 grow flex-wrap content-start pl-1 pt-1.5">
          <FileCell lines={["doc_dLWMrN5Dtc", "(1).zip"]}><div className="pb-1.5"><RarBig /></div></FileCell>
          <FileCell lines={["doc_dLWMrN5Dtc.z", "ip"]}><div className="pb-1.5"><RarBig /></div></FileCell>
          <FileCell lines={["Document.pdf.rar"]}><div className="pb-1.5"><RarBig /></div></FileCell>
          <FileCell lines={["filmet.jpg"]}>
            <div className="h-[46px] w-[91px] border border-[#222] bg-black pl-[15px] shadow-[1px_1px_2px_#999]"><div className="mt-0.5 h-px w-2 bg-[#3c3c10]" /></div>
          </FileCell>
          <FileCell lines={["latestbuild.png"]}>
            <div className="flex h-[46px] w-[91px] items-end border border-[#f4f4f4] bg-white pb-2 pl-7 shadow-[1px_1px_2px_#888]">
              <svg viewBox="0 0 26 4" className="h-1 w-[26px]"><path d="M0 2h26" stroke="#dfe49c" strokeWidth="3" strokeDasharray="1.300 .8" /></svg>
            </div>
          </FileCell>
          <FileCell lines={["password.txt"]}><div className="pb-0.5"><TextBig /></div></FileCell>
          <FileCell lines={["picturefield.png"]}>
            <div className="flex h-[46px] w-[91px] items-center justify-end border border-[#f4f4f4] bg-white pr-1.5 shadow-[1px_1px_2px_#888]"><div className="-mt-1 h-0.5 w-2 bg-[#dcebf0]" /></div>
          </FileCell>
        </div>
      </div>
      <div className="ml-px mr-px flex h-[54px] shrink-0 items-start border-t-4 border-[#d4d0c8] bg-white pl-[18px]">
        <svg viewBox="0 0 36 42" className="mt-0.5 h-[42px] w-9">
          <defs>
            <linearGradient id="df"><stop offset="0" stopColor="#fdf3c4" /><stop offset="1" stopColor="#e6c968" /></linearGradient>
            <linearGradient id="da"><stop offset="0" stopColor="#4db8f4" /><stop offset="1" stopColor="#1576c4" /></linearGradient>
          </defs>
          <path d="M4 1h24v35H8z" fill="#f3e09a" /><path d="M14 3h14v33H14z" fill="#eed887" />
          <path d="M2 1l9 5v35l-9-4z" fill="url(#df)" stroke="#dcc06a" strokeWidth=".6" />
          <path d="M22 15q6-2 9 0v12h5L26.500 39 18 27h4z" fill="url(#da)" stroke="#1a74b8" strokeWidth=".5" />
        </svg>
        <span className="ml-[23px] mt-1 text-[11.500px] tracking-normal">7 items</span>
      </div>
    </div>
  );
}

/* ---------- taskbar ---------- */

function Taskbar() {
  return (
    <div className="flex h-7 items-center border-t border-white bg-[#d4d0c8] pl-0.5 pr-[3px] text-[11px] text-black shadow-[0_-1px_0_#d4d0c8] [&_span]:pt-0.5">
      <div className={`flex h-[22px] w-[52px] items-center pl-0.5 ${raised}`}>
        <svg viewBox="0 0 16 16" className="h-4 w-4">
          <path d="M3.500 2q2-1.500 4.500 0L7 7Q4.500 5.500 2.300 7z" fill="#e8532a" /><path d="M9 2.500q3 1.500 5.500 0L13.300 7.300q-2.500 1.500-5.300 0z" fill="#6fb53a" />
          <path d="M2 8q2.500-1.500 5 0l-1 5q-2.500-1.500-5 0z" fill="#3f86dc" /><path d="M7.800 8.500q2.500 1.500 5.200 0L11.800 13.300q-2.500 1.500-5.200 0z" fill="#f6c22e" />
        </svg>
        <span className="text-[11.500px] font-bold tracking-[-0.2px]">Start</span>
      </div>
      <svg viewBox="0 0 18 18" className="ml-4 h-[18px] w-[18px]"><path d="M14.500 11.500A6 6 0 1 1 15 9H5" fill="none" stroke="#3d9fe0" strokeWidth="2.600" /><path d="M2 15.500Q0 13 6 7t11-5" fill="none" stroke="#ecc243" strokeWidth="1.500" /></svg>
      <div className="ml-[9px] flex h-[22px] w-[31px] items-center justify-center border border-b-white border-l-[#404040] border-r-white border-t-[#404040] bg-[#f7f6f4]"><ExplorerFolder /></div>
      <svg viewBox="0 0 16 16" className="ml-[11px] h-4 w-4"><rect x=".5" y=".5" width="15" height="15" fill="#a9cdf0" stroke="#6d9ecb" /><circle cx="8" cy="8" r="6" fill="#f28a1c" /><path d="M6 4.500v7L12 8z" fill="#fff" /></svg>
      <div className={`ml-[10px] flex h-[22px] w-8 items-center justify-center ${raised}`}>
        <svg viewBox="0 0 16 16" className="h-[15px] w-[15px]"><circle cx="8" cy="8" r="7.500" fill="#fdd024" /><path d="M1.500 4.250A7.500 7.500 0 0 1 14.500 4.250H8L4.750 9.900z" fill="#e2382b" /><path d="M1.500 4.250A7.500 7.500 0 0 0 8 15.500l3.250-5.600H4.750z" fill="#2da14c" /><circle cx="8" cy="8" r="3.600" fill="#fff" /><circle cx="8" cy="8" r="2.800" fill="#3f7fe8" /></svg>
      </div>
      <svg viewBox="0 0 16 16" className="ml-[10px] h-4 w-4"><ellipse cx="8" cy="8" rx="7.500" ry="7.800" fill="#c5141b" /><ellipse cx="8" cy="8" rx="2.600" ry="5.600" fill="#f2e9e9" /><ellipse cx="8" cy="8" rx="1.400" ry="4.800" fill="#a01015" /></svg>
      <div className={`ml-[10px] flex h-[22px] w-8 items-center pl-[5px] ${raised}`}><RarSmall /><div className="ml-[5px] h-[19px] w-px bg-[#404040]" /></div>
      <div className="ml-auto flex h-[22px] w-[171px] items-center border border-b-white border-l-[#808080] border-r-white border-t-[#808080] pl-1.5">
        <svg viewBox="0 0 6 9" className="h-[9px] w-1.5"><path d="M.5 4L3 1.500 5.500 4M.5 8L3 5.500 5.500 8" fill="none" stroke="#000" strokeWidth="1.300" /></svg>
        <svg viewBox="0 0 16 14" className="ml-2.5 h-3.5 w-4"><path d="M.5 4.500H3l3.500-3.500v12L3 9.500H.5z" fill="#fff" stroke="#555" strokeWidth=".9" /><path d="M9 4q2 3 0 6M11.500 2.500q3 4.500 0 9M13.500 1q3.500 6 0 12" fill="none" stroke="#777" strokeWidth=".9" /></svg>
        <svg viewBox="0 0 16 14" className="ml-2 h-3.5 w-4"><rect x="4.500" y="3.500" width="11" height="8" fill="#aaa8a2" stroke="#fff" /><rect x="3.500" y="2.500" width="12" height="9.500" fill="none" stroke="#555" strokeWidth=".8" /><path d="M.5.500h4v4h-4zM2.500 4.500v8h3M7 13.500h6" fill="none" stroke="#555" /></svg>
        <svg viewBox="0 0 16 14" className="ml-2 h-3.5 w-4"><path d="M1.500 0v14" stroke="#666" strokeWidth="1.500" /><path d="M2.500 1.500h6v2h6l-2 2.500 2 3h-6v-1h-6z" fill="#fff" stroke="#666" strokeWidth=".9" /></svg>
        <span className="ml-4 whitespace-nowrap">8:47 AM</span>
        <svg viewBox="0 0 16 13" className="ml-auto h-[13px] w-4"><rect x=".5" y=".5" width="15" height="10" fill="#1f62c0" stroke="#244a80" /><path d="M1 8Q9 7 15 2v6z" fill="#57a0ea" /><path d="M4 12h8" stroke="#555" strokeWidth="1.500" /></svg>
      </div>
    </div>
  );
}

function Watermark() {
  return (
    <svg viewBox="0 0 204 70" className="absolute left-[1034px] top-[605px] h-[70px] w-[204px] drop-shadow-[0_0_3px_rgba(0,0,0,0.3)]">
      <g fill="#fff" fillOpacity=".75" stroke="#fff" strokeOpacity=".65" strokeWidth="1.200" fontFamily="'Liberation Sans', sans-serif" fontSize="50">
        <text x="5" y="54" textLength="62" lengthAdjust="spacingAndGlyphs">ANY</text>
        <text x="134" y="54" textLength="64" lengthAdjust="spacingAndGlyphs">RUN</text>
      </g>
      <g fill="none" stroke="#fff" strokeOpacity=".8" strokeWidth="4">
        <path d="M81 14l-5 3v37l5 3" />
        <path d="M86 60V7l42 25-40 26" />
        <path d="M94 19v30l25-17M86 62l6 3 30-19" strokeWidth="2.500" />
      </g>
    </svg>
  );
}

export default function App() {
  return (
    <div className="relative h-[720px] w-[1280px] overflow-hidden bg-white font-['DejaVu_Sans_Condensed','DejaVu_Sans',sans-serif]">
      <Browser />
      <Taskbar />
      <WinRar />
      <Explorer />
      <Watermark />
    </div>
  );
}
